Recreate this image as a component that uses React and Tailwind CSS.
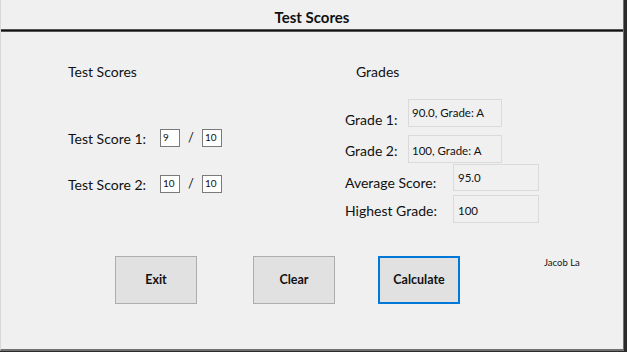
export default function App() {
  return (
    <div className="w-[627px] h-[352px] flex bg-[#2b2b2b] font-['Lato',sans-serif] text-[#111]">
      <div className="w-[624px] h-[351px] bg-[#f0f0f0] border-r border-b-2 border-[#707070] border-l border-l-[#d8d8d8] flex flex-col">
        <div className="h-[29px] flex items-center justify-center pt-[6px] text-[15px] font-bold">
          Test Scores
        </div>
        <div className="h-[3px] bg-[#111] border-y border-[#555]" />

        <div className="flex">
          <div className="w-[344px] pl-[67px] flex flex-col">
            <div className="mt-[32px] h-[16px] leading-[16px] text-[14px]">Test Scores</div>

            <div className="mt-[49px] h-[18px] flex items-center text-[14px]">
              <span className="w-[92px]">Test Score 1:</span>
              <div className="w-[20px] h-[18px] bg-white border border-[#7a7a7a] text-[10px] leading-[14px] pl-[2px]">9</div>
              <span className="w-[22px] text-center text-[13px]">/</span>
              <div className="w-[20px] h-[18px] bg-white border border-[#7a7a7a] text-[10px] leading-[14px] pl-[2px]">10</div>
            </div>

            <div className="mt-[28px] h-[18px] flex items-center text-[14px]">
              <span className="w-[92px]">Test Score 2:</span>
              <div className="w-[20px] h-[18px] bg-white border border-[#7a7a7a] text-[10px] leading-[14px] pl-[2px]">10</div>
              <span className="w-[22px] text-center text-[13px]">/</span>
              <div className="w-[20px] h-[18px] bg-white border border-[#7a7a7a] text-[10px] leading-[14px] pl-[2px]">10</div>
            </div>
          </div>

          <div className="flex flex-col text-[14px]">
            <div className="mt-[32px] pl-[11px] h-[16px] leading-[16px]">Grades</div>

            <div className="mt-[19px] flex items-start">
              <span className="w-[63px] mt-[13px] leading-[16px]">Grade 1:</span>
              <div className="w-[94px] h-[28px] border border-[#dadada] text-[11.5px] pl-[3px] pt-[6px] leading-[14px]">90.0, Grade: A</div>
            </div>

            <div className="mt-[7px] flex items-start">
              <span className="w-[63px] mt-[8px] leading-[16px]">Grade 2:</span>
              <div className="w-[94px] h-[28px] border border-[#dadada] text-[11.5px] pl-[3px] pt-[8px] leading-[14px]">100, Grade: A</div>
            </div>

            <div className="mt-[1px] flex items-start">
              <span className="w-[108px] mt-[11px] leading-[16px]">Average Score:</span>
              <div className="w-[86px] h-[27px] border border-[#dadada] text-[11.5px] pl-[4px] pt-[6px] leading-[14px]">95.0</div>
            </div>

            <div className="mt-[4px] flex items-start">
              <span className="w-[108px] mt-[8px] leading-[16px]">Highest Grade:</span>
              <div className="w-[86px] h-[28px] border border-[#dadada] text-[11.5px] pl-[4px] pt-[8px] leading-[14px]">100</div>
            </div>
          </div>
        </div>

        <div className="mt-[33px] flex items-start pl-[114px]">
          <button className="w-[82px] h-[48px] bg-[#e1e1e1] border border-[#adadad] text-[12.5px] font-bold">Exit</button>
          <button className="ml-[56px] w-[82px] h-[48px] bg-[#e1e1e1] border border-[#adadad] text-[12.5px] font-bold">Clear</button>
          <button className="ml-[43px] w-[82px] h-[48px] bg-[#e1e1e1] border-2 border-[#0078d7] text-[12.5px] font-bold">Calculate</button>
          <span className="ml-[84px] mt-[1px] text-[9.5px] leading-[12px]">Jacob La</span>
        </div>
      </div>
    </div>
  );
}
